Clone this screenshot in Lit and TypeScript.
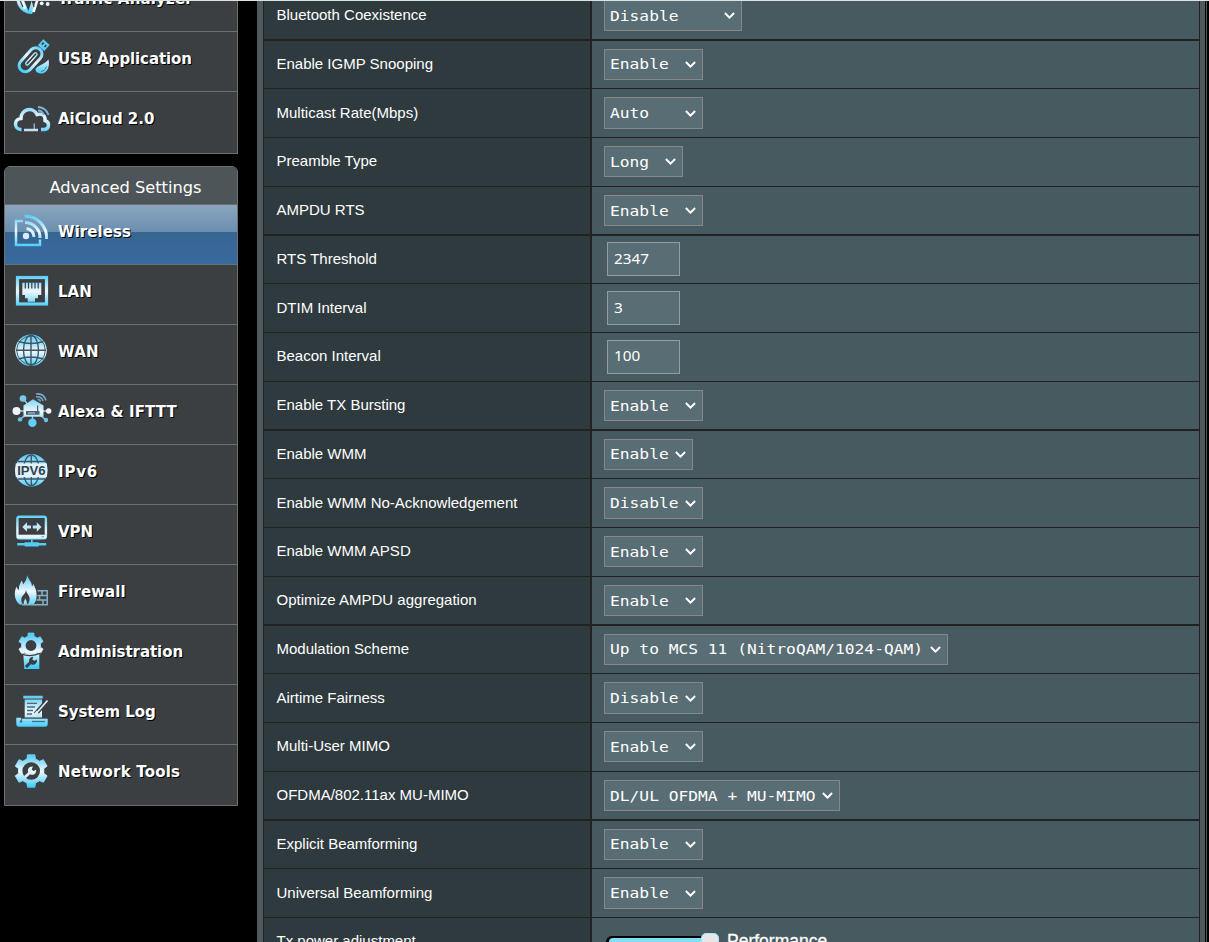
import { LitElement, html, svg, css, nothing } from "lit";
import { customElement, property } from "lit/decorators.js";
import { classMap } from "lit/directives/class-map.js";

type Control =
  | { kind: "select"; value: string; width: number }
  | { kind: "input"; value: string }
  | { kind: "slider"; value: string };

interface Setting {
  label: string;
  control: Control;
}

const sel = (label: string, value: string, width = 99): Setting => ({
  label,
  control: { kind: "select", value, width },
});
const inp = (label: string, value: string): Setting => ({ label, control: { kind: "input", value } });

const SETTINGS: Setting[] = [
  sel("Bluetooth Coexistence", "Disable", 138),
  sel("Enable IGMP Snooping", "Enable"),
  sel("Multicast Rate(Mbps)", "Auto"),
  sel("Preamble Type", "Long", 79),
  sel("AMPDU RTS", "Enable"),
  inp("RTS Threshold", "2347"),
  inp("DTIM Interval", "3"),
  inp("Beacon Interval", "100"),
  sel("Enable TX Bursting", "Enable"),
  sel("Enable WMM", "Enable", 89),
  sel("Enable WMM No-Acknowledgement", "Disable"),
  sel("Enable WMM APSD", "Enable"),
  sel("Optimize AMPDU aggregation", "Enable"),
  sel("Modulation Scheme", "Up to MCS 11 (NitroQAM/1024-QAM)", 344),
  sel("Airtime Fairness", "Disable"),
  sel("Multi-User MIMO", "Enable"),
  sel("OFDMA/802.11ax MU-MIMO", "DL/UL OFDMA + MU-MIMO", 236),
  sel("Explicit Beamforming", "Enable"),
  sel("Universal Beamforming", "Enable"),
  { label: "Tx power adjustment", control: { kind: "slider", value: "Performance" } },
];

/** Six-toothed gear outline centred on (cx, cy). */
function gear(cx: number, cy: number, outer: number, inner: number): string {
  const pts: string[] = [];
  for (let i = 0; i < 6; i++) {
    const mid = -90 + i * 60;
    const steps: [number, number][] = [
      [-19, inner],
      [-13, outer],
      [13, outer],
      [19, inner],
    ];
    for (const [d, r] of steps) {
      const a = ((mid + d) * Math.PI) / 180;
      pts.push(`${(cx + r * Math.cos(a)).toFixed(2)} ${(cy + r * Math.sin(a)).toFixed(2)}`);
    }
  }
  return `M${pts.join("L")}Z`;
}

const F = "url(#g)";
const BG = "#3b3f41";

const ICONS: Record<string, unknown> = {
  traffic: svg`
    <path d="M4.500 21A15 15 0 0 0 20 36L23 30L20 22L16.500 33L11 20Z" fill=${F}/>
    <path d="M9.500 22l3.500 9M21.500 34l4.500-14" stroke="#fff" stroke-width="2.500" fill="none"/>
    <path d="M19.500 20l2.500 9M7.500 21l3.500 8" stroke=${BG} stroke-width="1.200"/>
    <circle cx="29.700" cy="25.300" r="1.900" fill="#e8f6fd"/><circle cx="35.700" cy="26" r="1.900" fill="#e8f6fd"/>`,
  usb: svg`
    <g transform="rotate(42 18 22)">
      <rect x="12" y="7.500" width="12.500" height="28" rx="6.200" fill="none" stroke=${F} stroke-width="3"/>
      <rect x="16.800" y="12.500" width="3" height="15.500" rx="1.500" fill=${BG} stroke=${F} stroke-width="1.300"/>
      <rect x="14" y="-2.300" width="8.500" height="8" fill=${F}/>
      <rect x="15.700" y="0" width="1.800" height="2.600" fill=${BG}/><rect x="19.200" y="0" width="1.800" height="2.600" fill=${BG}/>
    </g>
    <path d="M23.500 31C26 27 32 27 36.500 21.500C38.200 29 35 35.500 29.500 35.500C26.500 35.500 23.500 34.500 23.500 31Z" fill=${F}/>
    <path d="M29 33.500c3-.5 4.500-2.500 5.500-5" stroke="#3b7f9e" stroke-width="1" fill="none"/>`,
  cloud: svg`
    <g fill="none" stroke=${F} stroke-width="3.400">
      <path d="M9.500 31.500H8.500C1.500 30.500 2 21 9 20.500C9 11 21 8 25 16.500C31 15 33.500 18 33 22.500C38 24 37.500 31 32.500 31.500H29"/>
    </g>
    <path d="M12 30.700h14v2.500H12zM21.700 25.500h1v5.500h-1z" fill="#bfe2f3"/>
    <path d="M26 12.500Q30 12.500 31.800 17M26 9Q34 9.500 36.500 17" fill="none" stroke="#7fb4d4" stroke-width="1.900"/>`,
  wireless: svg`
    <g fill="none" stroke=${F}>
      <path d="M11 10H4v24h24v-5.500" stroke-width="2.500"/>
      <path d="M14.500 17.500A8.500 8.500 0 0 1 22 26" stroke-width="3"/>
      <path d="M13 11.500A15 15 0 0 1 28 27" stroke-width="3"/>
      <path d="M12.500 5A21.500 21.500 0 0 1 34.500 28" stroke-width="3"/>
    </g>
    <circle cx="14" cy="25" r="3.200" fill="#d8effb"/>`,
  lan: svg`
    <rect x="5.500" y="6.500" width="29" height="26.500" fill="none" stroke=${F} stroke-width="3.200"/>
    <path d="M10.300 11.700h19v12.300h-3.300v3.300h-3v3.400h-7.300v-3.400h-2.700v-3.300h-2.700z" fill=${F}/>
    <path d="M13.300 11.500v6M16.500 11.500v6M19.800 11.500v6M23 11.500v6M26.200 11.500v6" stroke=${BG} stroke-width="1.200"/>`,
  wan: svg`
    <circle cx="19" cy="19.300" r="15.800" fill=${F}/>
    <circle cx="19" cy="19.300" r="14.300" fill="none" stroke="#4a5f6b" stroke-width="1"/>
    <g fill="none" stroke="#3f5360" stroke-width="1.400">
      <ellipse cx="19" cy="19.300" rx="7.500" ry="15"/><path d="M19 4v31M4 19.300h30M6.500 10.500Q19 14.500 31.500 10.500M6.500 28Q19 24 31.500 28"/>
    </g>`,
  alexa: svg`
    <path d="M4 20h33M11 7.500l5 6M8 28.500l6-5M20.500 31v-6M34 29l-6-5" stroke="#9bd0ec" stroke-width="1.300"/>
    <path d="M21 8.300l10.500 6.200v11.200H11.500V14.500z" fill=${F}/>
    <path d="M14 20h13.500v3.700H14zM25 14.500h1.200V20H25z" fill="#4c6070"/><path d="M16 22h7" stroke="#fff" stroke-width=".7"/>
    <circle cx="11" cy="7.500" r="3.300" fill="#7bc8ec"/><circle cx="4.500" cy="20" r="4" fill="#eef6fc"/>
    <circle cx="36.700" cy="20" r="2.700" fill="#eef6fc"/><circle cx="8" cy="28.400" r="2.200" fill="#6fc0e6"/>
    <circle cx="20.400" cy="31.700" r="4.200" fill="#62cdf6"/><circle cx="34" cy="29" r="2.200" fill="#6fc0e6"/>
    <path d="M24 3Q32 2 34 9.500M24 5.800Q30 5.500 31 10M25.500 8.500Q28 8.500 28.500 10.500" fill="none" stroke="#75a9c9" stroke-width="1.600"/>`,
  ipv6: svg`
    <circle cx="19.300" cy="19.300" r="16.300" fill=${F}/>
    <g fill="none" stroke="#3f5360" stroke-width="1.300">
      <ellipse cx="19.300" cy="19.300" rx="8" ry="15.300"/><path d="M19.300 4v31M6 10.500h27M6 28h27"/>
    </g>
    <rect x="3.700" y="12.500" width="31.300" height="13.500" fill="#e3f3fc"/>
    <text x="5.200" y="24" class="ip" textLength="28.500" lengthAdjust="spacingAndGlyphs">IPV6</text>`,
  vpn: svg`
    <rect x="5.400" y="5.800" width="28.500" height="21.500" rx="2" fill="none" stroke=${F} stroke-width="2.400"/>
    <path d="M5 23.700h29v3.600H5z" fill="#e7f4fc"/><path d="M29.500 25.700h2.500" stroke="#6b94aa" stroke-width="1"/>
    <path d="M10.300 16l4.700-4.700v3.200h4v3h-4v3.200zM29.500 16l-4.700-4.700v3.200h-4v3h4v3.200z" fill="#c5e8f8"/>
    <path d="M19 28.500h1.700v2.700h6v.9h7.500v2.300h-7.500v1.100H12.700v-1.100H5.200v-2.300h7.500v-.9H19z" fill="#51cdf8"/>`,
  firewall: svg`
    <path d="M15 4C16 8 20 10.500 20 15.500C21 14.500 21 13.500 21 12.500C25 19 26.500 28 21.500 33.500H7.500C2.500 29.500 1.500 22 4.500 15.500C5 17.500 6 18.500 7 19C6.500 14.500 8.500 12.500 9.500 9.500C10.500 11 11 12 11 13.500C13.500 10.500 15 8 15 4Z" fill=${F}/>
    <path d="M14 19C14.500 23 18.500 24.500 17.500 29.500C17 32 16 33 15 33.500H11C8.500 30.500 9 26.500 11 24.500C12.500 23 13.500 21.500 14 19Z" fill=${BG}/>
    <path d="M13.500 27C13.500 29 15.500 29.500 14.800 33.500H12C11 31 12.500 29.500 13.500 27Z" fill="#9fdcf6"/>
    <path d="M25.500 19.700h9.700v14H10M25.500 24.500h9.700M24.500 29h10.700M30 19.700v4.800M27.500 24.500V29M31 29v4.700" fill="none" stroke="#86b2c8" stroke-width="1.500"/>`,
  admin: svg`
    <path d=${gear(19, 14.3, 12.6, 9.6)} fill=${F} stroke=${F} stroke-width=".8" stroke-linejoin="round"/><circle cx="19" cy="14.500" r="5.400" fill=${BG}/>
    <path d="M11.300 22.500h16v15.500h-15z" fill=${F}/>
    <path d="M9 23Q19 26.500 29 22" stroke=${BG} stroke-width="1.200" fill="none"/>
    <path d="M14 36l5-5" stroke=${BG} stroke-width="3"/><path d="M24.800 28.500a4 4 0 1 1-3.600-2.700l-.8 3 2.200 1z" fill=${BG}/>`,
  syslog: svg`
    <path d="M11.300 4.700h19.400v2.700H11.300zM12.700 8.500h17.300v18H12.700z" fill=${F}/>
    <path d="M15 12.300h10M15 16h8M15 19.500h6M15 23h5" stroke="#4c6878" stroke-width="1.300"/>
    <path d="M36 9L23.500 23" stroke=${BG} stroke-width="4.500"/>
    <path d="M35.500 9.500L25 21.500M24.500 21l-3.200 4 4.600-2z" stroke="#d5edf8" stroke-width="1.800" fill="#fff"/>
    <path d="M4.300 26.700h5v3.500h26.400v2.800q0 2.700-2.500 2.700H6.800q-2.500 0-2.500-2.700z" fill=${F}/><path d="M10 27.700h25.700v3H10z" fill=${F}/>
    <circle cx="9" cy="30.500" r="1.300" fill="#3a6e88"/><path d="M20 30.500h13" stroke="#3f7088" stroke-width="1.300"/>`,
  tools: svg`
    <path d=${gear(19.2, 20, 16.6, 12.8)} fill=${F} stroke=${F} stroke-width="1" stroke-linejoin="round"/>
    <circle cx="19.200" cy="20" r="8.800" fill=${BG}/>
    <path d="M12.800 26.200l6.500-6" stroke="#d9eefa" stroke-width="2.800"/>
    <path d="M24.200 18.800a4.200 4.200 0 1 1-3.300-3.300l-1.200 3 1.800 1.600z" fill="#e3f3fc"/>`,
};

interface MenuItem {
  icon: string;
  label: string;
  /** Letter spacing in pixels. */
  spacing?: number;
  active?: boolean;
}

const GENERAL: MenuItem[] = [
  { icon: "traffic", label: "Traffic Analyzer", spacing: 0.18 },
  { icon: "usb", label: "USB Application", spacing: -0.1 },
  { icon: "cloud", label: "AiCloud 2.0" },
];

const ADVANCED: MenuItem[] = [
  { icon: "wireless", label: "Wireless", spacing: 0.08, active: true },
  { icon: "lan", label: "LAN" },
  { icon: "wan", label: "WAN", spacing: 0.3 },
  { icon: "alexa", label: "Alexa & IFTTT", spacing: 0.1 },
  { icon: "ipv6", label: "IPv6", spacing: 0.8 },
  { icon: "vpn", label: "VPN" },
  { icon: "firewall", label: "Firewall", spacing: 0.05 },
  { icon: "admin", label: "Administration", spacing: -0.06 },
  { icon: "syslog", label: "System Log", spacing: -0.05 },
  { icon: "tools", label: "Network Tools", spacing: 0.2 },
];

@customElement("side-menu")
export class SideMenu extends LitElement {
  @property() heading = "";
  @property({ attribute: false }) items: MenuItem[] = [];

  static styles = css`
    :host {
      display: block;
      box-sizing: border-box;
      width: 234px;
      border: 1px solid #6b7071;
      background: #3b3f41;
      overflow: hidden;
      color: #fff;
      font-family: Verdana, "DejaVu Sans", sans-serif;
    }
    :host([heading]) {
      border-radius: 6px 6px 0 0;
    }
    .heading {
      box-sizing: border-box;
      height: 38px;
      padding: 11px 0 0 9px;
      border-bottom: 1px solid #6b7071;
      background: #4d5558;
      font-size: 16.25px;
      line-height: 20px;
      text-align: center;
      white-space: nowrap;
    }
    .item {
      display: flex;
      box-sizing: border-box;
      height: 60px;
      padding: 6px 0 0 7px;
      border-bottom: 1px solid #6b7071;
    }
    .item:last-child {
      border-bottom: 0;
    }
    .active {
      background: linear-gradient(#8ba6bf, #6a8eae 27px, #376592 27px, #386a9d);
    }
    .icon {
      flex: none;
      width: 40px;
      height: 40px;
      overflow: visible;
    }
    .ip {
      font: bold 13px "Liberation Sans", sans-serif;
      fill: #2f4450;
    }
    .label {
      padding: 12px 0 0 6px;
      font-size: 15px;
      line-height: 18px;
      font-weight: bold;
      text-shadow: 1px 1px 0 #000;
      white-space: nowrap;
    }
  `;

  render() {
    return html`${this.heading ? html`<div class="heading">${this.heading}</div>` : nothing}
      ${this.items.map(
        (it) => html`<div class=${classMap({ item: true, active: !!it.active })}>
          <svg class="icon" viewBox="0 0 40 40">
            <defs>
              <linearGradient id="g" gradientUnits="userSpaceOnUse" x1="0" y1="5" x2="0" y2="36">
                <stop offset="0" stop-color="#5ecdf5" />
                <stop offset=".5" stop-color="#eff7fd" />
                <stop offset="1" stop-color="#3fcbfb" />
              </linearGradient>
            </defs>
            ${ICONS[it.icon]}
          </svg>
          <div class="label" style="letter-spacing:${it.spacing ?? 0}px">${it.label}</div>
        </div>`
      )}`;
  }
}

@customElement("app-root")
export class AppRoot extends LitElement {
  static styles = css`
    :host {
      display: block;
      position: relative;
      height: 942px;
      overflow: hidden;
      background: #000;
      color: #fff;
      font-family: Arial, "Liberation Sans", sans-serif;
      font-size: 15px;
    }
    .topline {
      position: absolute;
      inset: 0 0 auto 0;
      height: 1px;
      background: #dce3e4;
    }
    .page {
      display: grid;
      grid-template-columns: 257px 949px 1px;
      height: 942px;
    }
    .side {
      display: flex;
      flex-direction: column;
      gap: 12px;
      margin: -29px 0 0 4px;
    }
    .general {
      height: 183px;
    }
    .advanced {
      height: 640px;
    }
    .panel {
      margin-top: -8px;
      height: 950px;
      overflow: hidden;
      padding: 0 5px 0 6px;
      background: #4d595d;
      border-right: 1px solid #000;
      box-shadow: 1px 0 0 #4d595d;
    }
    .table {
      border: solid #222;
      border-width: 0 1px;
    }
    .row {
      display: grid;
      grid-template-columns: 328px 1fr;
      box-sizing: border-box;
      height: 49px;
      border-bottom: 1px solid #222;
      line-height: 17px;
    }
    .row:nth-child(4n + 1) {
      border-bottom-width: 2px;
    }
    .row:nth-child(4n + 2) {
      height: 48px;
    }
    .name {
      padding: 14px 0 0 12.500px;
      background: #2f3a3e;
      border-right: 2px solid #222;
      white-space: nowrap;
    }
    .row:nth-child(4n + 3) .name {
      padding-top: 15px;
    }
    .value {
      padding: 8px 0 0 12px;
      background: #475a5f;
    }
    .select {
      display: flex;
      justify-content: space-between;
      align-items: flex-start;
      box-sizing: border-box;
      height: 31px;
      padding: 0 6px 0 5px;
      border: 1px solid #888;
      background: #596d74;
      font-family: "Lucida Console", "DejaVu Sans Mono", monospace;
      font-size: 16.250px;
      line-height: 19px;
    }
    .row:nth-child(4n + 3) .select {
      height: 32px;
    }
    .choice {
      margin-top: 5px;
      transform: scaleY(0.9);
      transform-origin: 0 15px;
      white-space: pre;
    }
    .row:nth-child(4n + 2) .choice {
      margin-top: 4px;
    }
    .chevron {
      flex: none;
      width: 11px;
      height: 7px;
      margin-top: 11px;
    }
    .row:nth-child(4n + 3) .chevron {
      margin-top: 12px;
    }
    .input {
      box-sizing: border-box;
      width: 73px;
      height: 34px;
      margin: -1px 0 0 3px;
      padding: 5px 0 0 6px;
      border: 1px solid #929ea1;
      background: #596d74;
      font-family: "Noto Sans", sans-serif;
      font-size: 15.300px;
      line-height: 18px;
    }
    .row:nth-child(4n + 2) .input {
      margin-top: -2px;
      padding-top: 6px;
    }
    .row:nth-child(4n + 3) .input {
      padding-top: 6px;
    }
    .slider {
      display: flex;
      gap: 8px;
      padding: 6px 0 0 2px;
    }
    .track {
      box-sizing: border-box;
      width: 113px;
      height: 14px;
      margin-top: 4px;
      padding: 2px 0 0 3px;
      border-radius: 6px;
      background: #000;
    }
    .fill {
      height: 10px;
      border-radius: 4px 0 0 4px;
      background: #7fdff9;
    }
    .thumb {
      position: relative;
      box-sizing: border-box;
      width: 18px;
      height: 18px;
      margin: -5px 0 0 92px;
      top: -10px;
      border: 1px solid #a5e6fb;
      border-radius: 5px;
      background: #e6e6e6;
    }
    .level {
      font-size: 17.500px;
      line-height: 18px;
      -webkit-text-stroke: 0.3px #fff;
    }
  `;

  private control(c: Control) {
    if (c.kind === "select") {
      return html`<div class="select" style="width:${c.width}px">
        <span class="choice">${c.value}</span>
        <svg class="chevron" viewBox="0 0 11 7">
          <path d="M.9 1l4.600 4.600L10.100 1" fill="none" stroke="#fff" stroke-width="2" />
        </svg>
      </div>`;
    }
    if (c.kind === "input") return html`<div class="input">${c.value}</div>`;
    return html`<div class="slider">
      <div class="track"><div class="fill"></div><div class="thumb"></div></div>
      <span class="level">${c.value}</span>
    </div>`;
  }

  render() {
    return html`<div class="page">
        <nav class="side">
          <side-menu class="general" .items=${GENERAL}></side-menu>
          <side-menu class="advanced" heading="Advanced Settings" .items=${ADVANCED}></side-menu>
        </nav>
        <main class="panel">
          <div class="table">
            ${SETTINGS.map(
              (s) => html`<div class="row">
                <div class="name">${s.label}</div>
                <div class="value">${this.control(s.control)}</div>
              </div>`
            )}
          </div>
        </main>
      </div>
      <div class="topline"></div>`;
  }
}
